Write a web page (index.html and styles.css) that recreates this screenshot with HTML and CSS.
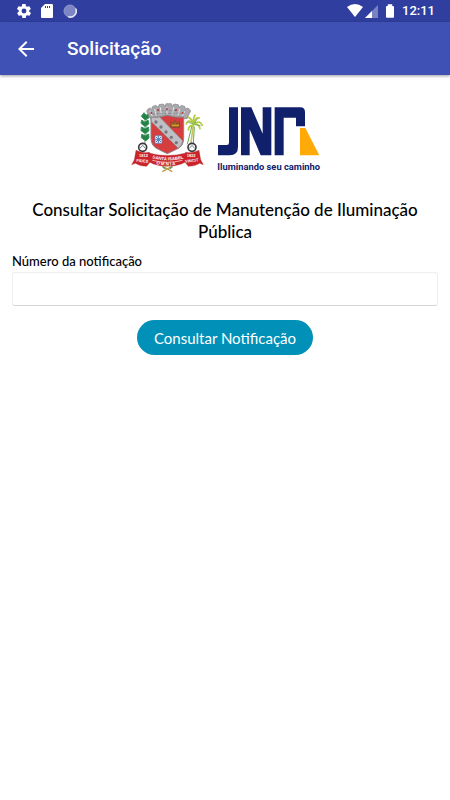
FILE: index.html
```html
<!DOCTYPE html>
<html lang="pt-BR">
<head>
<meta charset="utf-8">
<meta name="viewport" content="width=device-width, initial-scale=1">
<title>Solicitação</title>
<link rel="stylesheet" href="styles.css">
</head>
<body>
<div class="status">
  <div class="status-group notices">
    <svg width="14" height="14" viewBox="2 2 20 20" fill="#fff" aria-hidden="true"><path d="M19.4 13c0-.3.1-.6.1-1s0-.7-.1-1l2.1-1.6c.2-.2.3-.5.1-.7l-2-3.4c-.1-.2-.4-.3-.6-.2l-2.500 1c-.5-.4-1.100-.7-1.700-1l-.4-2.600c0-.3-.2-.5-.5-.5h-4c-.3 0-.5.2-.5.500l-.4 2.600c-.6.3-1.200.6-1.700 1l-2.500-1c-.2-.1-.5 0-.6.2l-2 3.400c-.1.2-.1.500.1.700L4.600 11c0 .3-.1.600-.1 1s0 .7.1 1l-2.100 1.600c-.2.2-.2.500-.1.700l2 3.400c.1.2.4.3.6.2l2.500-1c.5.4 1.100.7 1.700 1l.4 2.600c0 .3.2.500.5.500h4c.3 0 .5-.2.5-.5l.4-2.600c.6-.3 1.200-.6 1.700-1l2.500 1c.2.1.5 0 .6-.2l2-3.400c.1-.2.1-.5-.1-.7zM12 15.500a3.500 3.500 0 1 1 0-7 3.500 3.500 0 0 1 0 7z"/></svg>
    <svg width="12" height="14" viewBox="0 0 12 14" aria-hidden="true"><path fill="#fff" d="M4 0h7q1 0 1 1v12q0 1-1 1H1q-1 0-1-1V4z"/><path stroke="#303f9f" stroke-width="1" d="M4.500 2v2M6.500 2v2M8.500 2v2"/></svg>
    <svg width="14" height="14" viewBox="0 0 14 14" aria-hidden="true"><circle cx="7" cy="7" r="6" fill="#7d86c3" stroke="#929acd"/><path d="M12.700 4.500A6 6 0 0 1 5 12.600" fill="none" stroke="#e5e8f6" stroke-width="1.500"/></svg>
  </div>
  <div class="status-group">
    <svg width="44" height="16" viewBox="0 0 44 16" aria-hidden="true"><path fill="#fff" d="M0 4Q8-2 16 4L8 14z"/><path fill="#7982c1" d="M31 2v13H18z"/><path fill="#fff" d="M25 8v7h-7z"/></svg>
    <svg class="battery" width="8" height="14" viewBox="0 0 9 15" aria-hidden="true"><path fill="#fff" d="M2 0h5v2h1q1 0 1 1v11q0 1-1 1H1q-1 0-1-1V3q0-1 1-1h1z"/></svg>
    <span class="clock">12:11</span>
  </div>
</div>
<header class="toolbar">
  <button class="back" type="button" aria-label="Voltar"><svg width="16" height="16" viewBox="4 4 16 16" fill="#fff" aria-hidden="true"><path d="M20 11H7.830l5.590-5.590L12 4l-8 8 8 8 1.410-1.410L7.830 13H20z"/></svg></button>
  <h1 class="title">Solicitação</h1>
</header>
<main class="content">
  <div class="logos">
    <svg width="85" height="80" viewBox="0 0 255 240" role="img" aria-label="Brasão de Santa Isabel">
      <g stroke="#39935c" stroke-width="3" fill="#258348">
        <path d="M60 48v92" stroke="#6f9e68"/>
        <path d="M58 64l-9-9 8-11 6 8 8-5 1 12-9 6zM58 84l-10-8 2-10 9 6 10-6 3 11-9 8zM58 105l-10-7 1-11 11 5 10-5 2 11-9 8zM59 127l-10-8 1-10 10 4 11-5 1 12-9 8z"/>
      </g>
      <g fill="none" stroke-linecap="round">
        <path d="M198 135l8-63" stroke="#c9c45b" stroke-width="5"/>
        <path d="M187 138l14-55M205 137l3-50" stroke="#64a85c" stroke-width="3"/>
        <path d="M207 78q-18-17-23 0M207 77q-13-24-22-17M207 77q-4-18 3-25M207 77q2-19 16-17M207 77q18-12 25 5M207 79q14-4 18 13M205 82q-14 0-15 14" stroke="#b2cb41" stroke-width="5"/>
        <path d="M208 76l9-13M204 78l-14-5M211 80l15 3" stroke="#469c58" stroke-width="2"/>
      </g>
      <path fill="#a9a9ad" stroke="#838387" stroke-width="2" d="M76 62L65 39l5-7 6-2 5 5 1-9 10-4 8 6 2-8 13-2 5 7 3-8h16l3 8 5-7 13 2 2 8 8-6 10 4 1 9 5-5 6 2 5 7-12 23z"/>
      <path d="M75 40l8 17M89 33l5 20M106 28l3 22M126 27v22M146 28l-3 22M164 33l-5 19M179 40l-8 16" stroke="#e4e4e6" stroke-width="3"/>
      <path d="M82 48l86-3M97 38h61" stroke="#77777b" stroke-width="2" stroke-dasharray="7 5"/>
      <g fill="#b5363b"><circle cx="79" cy="45" r="3"/><circle cx="99" cy="36" r="3"/><circle cx="126" cy="33" r="3"/><circle cx="153" cy="36" r="3"/><circle cx="173" cy="45" r="3"/></g>
      <path fill="#d63d3e" stroke="#858589" stroke-width="3" d="M78 57q24 3 49-5 24 8 49 5v62q0 22-14 31-18 9-35 17-18-8-34-17-15-9-15-31z"/>
      <path fill="#bfc0c5" stroke="#88888d" stroke-width="2" d="M79 58q13 2 25-1l69 71q-2 14-13 23l-81-80z"/>
      <g fill="#77777d"><circle cx="93" cy="72" r="5"/><circle cx="108" cy="87" r="5"/><circle cx="123" cy="102" r="5"/><circle cx="139" cy="118" r="5"/><circle cx="154" cy="134" r="5"/></g>
      <path fill="#a36b24" stroke="#6e4a25" stroke-width="2" d="M138 70l7 8 5-11 6 11 7-8 1 18h-27z"/>
      <path d="M141 82h21" stroke="#e3a83b" stroke-width="3"/>
      <path fill="#e8eef7" stroke="#5a7fae" stroke-width="2" d="M90 113h21v23H90z"/>
      <path d="M93 117l15 15M108 117l-15 15M100 114v21M91 125h19" stroke="#4b80bc" stroke-width="3"/>
      <g fill="#fff" stroke="#39393c" stroke-width="5"><circle cx="53" cy="148" r="12"/><circle cx="201" cy="148" r="12"/></g>
      <path d="M44 152l9-10 9 10M192 152l9-10 9 10" stroke="#77777a" stroke-width="3" fill="none"/>
      <path d="M111 204l31 17M143 204l-31 17" stroke="#bd9b46" stroke-width="4"/>
      <path d="M113 207l8 5M142 207l-8 5" stroke="#4f965c" stroke-width="4"/>
      <g fill="#cd2429" stroke="#99242a" stroke-width="1">
        <path d="M33 157q18 10 40 6l8 22-16 20q-20 0-34-9l-11 4 8-15zM222 157q-18 10-40 6l-8 22 16 20q20 0 34-9l11 4-8-15z"/>
        <path d="M72 165q55 15 111 0l5 20q-12 18-61 20-49-2-60-20z"/>
      </g>
      <path d="M82 187q44 12 90 0" fill="none" stroke="#fff" stroke-width="2"/>
      <path id="ribbon" d="M82 181q46 12 93 0" fill="none"/>
      <path id="motto" d="M94 199q34 7 72 0" fill="none"/>
      <g class="crest-text"><text font-size="13"><textPath href="#ribbon">SANTA ISABEL</textPath></text><text font-size="13"><textPath href="#motto">O M N I A</textPath></text><text x="42" y="177" font-size="12">1812</text><text x="34" y="191" font-size="12" transform="rotate(6 34 191)">FIDES</text><text x="185" y="177" font-size="12">1832</text><text x="181" y="194" font-size="12" transform="rotate(-6 181 194)">VINCIT</text></g>
    </svg>
    <svg width="115" height="80" viewBox="30 0 345 240" role="img" aria-label="JNR - Iluminando seu caminho">
      <g transform="translate(30 0)">
        <path fill="#10206b" d="M57 28h27v119q0 25-25 25H24v-31h26q7 0 7-7zM93 28h31l34 79V28h26v144h-32l-33-78v78H93zM194 28h77q14 0 14 14v43h-27V59h-37v113h-27z"/>
        <path fill="#ffaa08" d="M270 90h16l42 82h-58z"/>
        <text class="slogan" x="22" y="217">Iluminando seu caminho</text>
      </g>
    </svg>
  </div>
  <h2 class="heading">Consultar Solicitação de Manutenção de Iluminação Pública</h2>
  <form class="form">
    <label class="label" for="numero">Número da notificação</label>
    <input class="field" id="numero" type="text">
    <button class="submit" type="button">Consultar Notificação</button>
  </form>
</main>
</body>
</html>
```
FILE: styles.css
```css
* { box-sizing: border-box; }
body {
  margin: 0;
  background: #fff;
  color: #000;
  font-family: Lato, "Noto Sans", sans-serif;
}
.status {
  display: flex;
  justify-content: space-between;
  align-items: center;
  height: 22px;
  padding: 0 15px 0 17px;
  background: #303f9f;
}
.status-group { display: flex; align-items: center; }
.notices { gap: 10px; }
.battery { margin-left: -5px; }
.clock {
  margin-left: 8px;
  color: #fff;
  font: 500 13px/22px Roboto, sans-serif;
}
.toolbar {
  display: flex;
  align-items: center;
  height: 53px;
  padding-left: 18px;
  background: #3f51b5;
  box-shadow: 0 1px 3px rgba(0, 0, 0, 0.4);
}
.back {
  display: flex;
  padding: 0;
  border: 0;
  background: none;
}
.title {
  margin: 0 0 0 33px;
  color: #fff;
  font: 500 19px/24px Roboto, sans-serif;
}
.content { padding: 23px 12px; }
.logos { display: flex; justify-content: center; }
.crest-text {
  fill: #fff;
  font-family: "Liberation Sans", sans-serif;
  font-weight: bold;
}
.slogan {
  fill: #10206b;
  font: bold 28px Roboto, sans-serif;
}
.heading {
  margin: 21px 0 8px;
  font-size: 17px;
  font-weight: 500;
  line-height: 22px;
  text-align: center;
}
.form { display: flex; flex-direction: column; }
.label {
  font-size: 13px;
  font-weight: 500;
  line-height: 21px;
}
.field {
  width: 100%;
  height: 34px;
  padding: 0 10px;
  border: 1px solid #eee;
  border-bottom-color: #d5d5d5;
  border-radius: 3px;
  background: #fff;
  font: inherit;
}
.submit {
  align-self: center;
  height: 35px;
  margin-top: 14px;
  padding: 0 17px;
  border: 0;
  border-radius: 18px;
  background: #0090b8;
  color: #fff;
  font: 15px/20px Lato, "Noto Sans", sans-serif;
}
```
